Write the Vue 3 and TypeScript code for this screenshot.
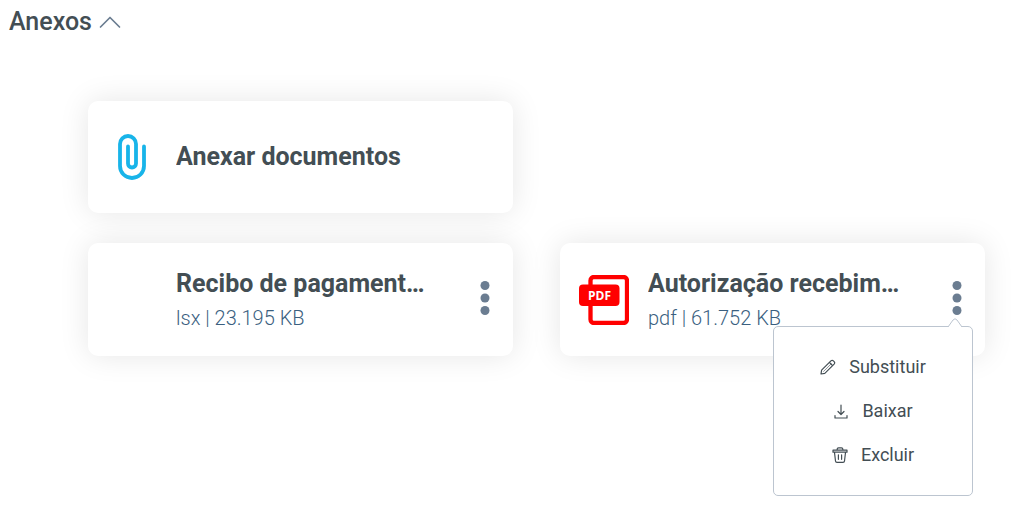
<script setup lang="ts">
import { ref } from 'vue'

interface Attachment {
  id: number
  name: string
  type: string
  size: string
}

const expanded = ref(true)
const openMenu = ref<number | null>(2)

const attachments: Attachment[] = [
  { id: 1, name: 'Recibo de pagament…', type: 'lsx', size: '23.195 KB' },
  { id: 2, name: 'Autorização recebim…', type: 'pdf', size: '61.752 KB' },
]

function toggleMenu(id: number): void {
  openMenu.value = openMenu.value === id ? null : id
}
</script>

<template>
  <section class="attachments">
    <h2 class="heading">
      <button class="toggle" type="button" :aria-expanded="expanded" @click="expanded = !expanded">
        <span>Anexos</span>
        <svg class="chevron" :class="{ closed: !expanded }" width="22" height="14" viewBox="0 0 22 14" aria-hidden="true">
          <path d="M1.5 12 11 2.5 20.500 12" fill="none" stroke="currentColor" stroke-width="1.7" stroke-linecap="round" stroke-linejoin="round" />
        </svg>
      </button>
    </h2>

    <div v-if="expanded" class="grid">
      <button class="card upload" type="button">
        <span class="icon">
          <svg width="28" height="46" viewBox="0 0 28 46" aria-hidden="true">
            <path d="M26 12.500V32a12 12 0 0 1-24 0V10a8 8 0 0 1 16 0V29.500a4 4 0 0 1-8 0V12.500" fill="none" stroke="#18b4e9" stroke-width="3.800" stroke-linecap="round" />
          </svg>
        </span>
        <span class="name">Anexar documentos</span>
      </button>

      <article v-for="file in attachments" :key="file.id" class="card file">
        <span class="icon">
          <svg v-if="file.type === 'pdf'" width="50" height="50" viewBox="0 0 50 50" role="img" aria-label="PDF">
            <rect x="11.500" y="2" width="36.500" height="46" rx="3.500" fill="#fff" stroke="#f00" stroke-width="4.300" />
            <rect y="9.500" width="40.500" height="21.500" rx="4" fill="#f00" />
            <text x="20.500" y="25" text-anchor="middle" class="badge">PDF</text>
          </svg>
        </span>
        <div class="details">
          <h3 class="name">{{ file.name }}</h3>
          <p class="meta">{{ file.type }} | {{ file.size }}</p>
        </div>
        <div class="actions">
          <button class="more" type="button" aria-label="Mais opções" :aria-expanded="openMenu === file.id" @click="toggleMenu(file.id)">
            <svg width="10" height="34" viewBox="0 0 10 34" aria-hidden="true">
              <g fill="currentColor">
                <circle cx="5" cy="4.500" r="4.500" />
                <circle cx="5" cy="17" r="4.500" />
                <circle cx="5" cy="29.500" r="4.500" />
              </g>
            </svg>
          </button>
          <div v-if="openMenu === file.id" class="menu">
            <svg class="arrow" width="16" height="11" viewBox="0 0 16 11" aria-hidden="true">
              <path d="M1 10 6 3Q8 .5 10 3L15 10V11H1Z" fill="#fff" />
              <path d="M1 10 6 3Q8 .5 10 3L15 10" fill="none" stroke="#bcc5d0" />
            </svg>
            <button class="option" type="button">
              <svg width="16" height="16" viewBox="0 0 16 16" aria-hidden="true">
                <path d="M1 15 1.600 11.200 10.900 1.900Q12.200.7 13.400 1.900L14.100 2.600Q15.300 3.800 14.100 5.100L4.800 14.400ZM9.400 3.400 12.600 6.600" />
                <path d="M11.300 4.700 3.600 12.400" stroke-width=".6" />
              </svg>
              <span>Substituir</span>
            </button>
            <button class="option" type="button">
              <svg width="16" height="16" viewBox="0 0 16 16" aria-hidden="true">
                <path d="M8 2V11.500M5 8.500 8 11.500 11 8.500M2 12.500V15H14V12.500" />
              </svg>
              <span>Baixar</span>
            </button>
            <button class="option" type="button">
              <svg width="16" height="16" viewBox="0 0 16 16" aria-hidden="true">
                <path d="M1 3.200H15V5.200H1ZM5.200 3V2Q5.200.8 6.500.8H9.500Q10.800.8 10.800 2V3M2.500 5.500 3.500 14Q3.600 15.300 5 15.300H11Q12.400 15.300 12.500 14L13.500 5.500M6.400 7.800V12.300M9.600 7.800V12.300" />
              </svg>
              <span>Excluir</span>
            </button>
          </div>
        </div>
      </article>
    </div>
  </section>
</template>

<style>
body {
  background: #fff;
}
</style>

<style scoped>
.attachments {
  box-sizing: border-box;
  min-height: 100vh;
  padding: 6px 31px 32px 9px;
  font-family: Roboto, "Liberation Sans", sans-serif;
  color: #434e54;
}

button {
  margin: 0;
  padding: 0;
  border: 0;
  background: none;
  color: inherit;
  font: inherit;
  cursor: pointer;
}

.heading {
  margin: 0;
  font-size: 25px;
  font-weight: 500;
  line-height: 32px;
}

.toggle {
  display: flex;
  align-items: center;
  gap: 7px;
}

.chevron {
  color: #6b7d91;
}

.chevron.closed {
  transform: rotate(180deg);
}

.grid {
  display: grid;
  grid-template-columns: 1fr 1fr;
  gap: 30px 47px;
  margin: 63px 0 0 79px;
}

.card {
  display: grid;
  grid-template-columns: 88px minmax(0, 1fr) 57px;
  align-items: center;
  min-height: 112px;
  border-radius: 10px;
  background: #fff;
  box-shadow: 0 0 30px rgba(0, 0, 0, 0.1);
  text-align: left;
}

.upload {
  grid-column: 1;
}

.file {
  min-height: 113px;
}

.file:nth-child(2) {
  grid-column: 1;
}

.icon {
  display: flex;
  justify-content: center;
}

.icon svg {
  display: block;
}

.badge {
  fill: #fff;
  font-family: "Open Sans", sans-serif;
  font-size: 12px;
  font-weight: 700;
}

.details {
  padding-right: 24px;
}

.name {
  margin: 0;
  overflow: hidden;
  font-size: 25px;
  font-weight: 700;
  line-height: 32px;
  text-overflow: ellipsis;
  white-space: nowrap;
}

.meta {
  margin: 4px 0 0;
  color: #3b5f7f;
  font-size: 20px;
  font-weight: 300;
  line-height: 28px;
}

.actions {
  position: relative;
  padding-bottom: 3px;
}

.more {
  display: flex;
  justify-content: center;
  width: 57px;
  color: #6b7d91;
}

.menu {
  position: absolute;
  z-index: 1;
  top: 45px;
  right: 12px;
  display: flex;
  box-sizing: border-box;
  flex-direction: column;
  align-items: center;
  gap: 20px;
  width: 200px;
  padding: 28px 0;
  border: 1px solid #bcc5d0;
  border-radius: 5px;
  background: #fff;
}

.arrow {
  position: absolute;
  top: -10px;
  right: 9px;
}

.option {
  display: flex;
  align-items: center;
  gap: 13px;
  font-size: 18px;
  line-height: 24px;
}

.option svg {
  fill: none;
  stroke: currentColor;
  stroke-width: 1.2;
  stroke-linejoin: round;
  stroke-linecap: round;
}
</style>
